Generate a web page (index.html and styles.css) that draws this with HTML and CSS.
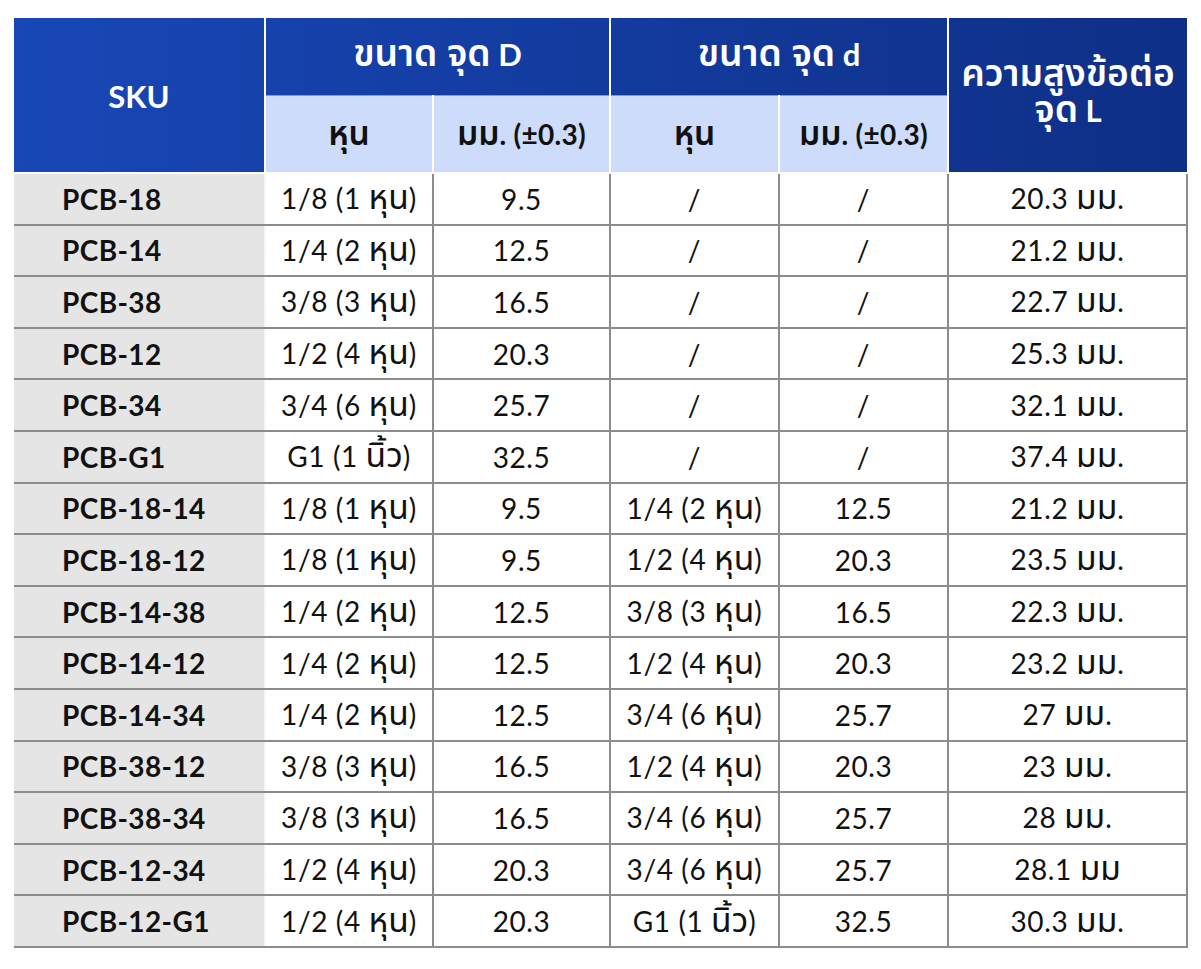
FILE: index.html
```html
<!DOCTYPE html>
<html lang="th">
<head>
<meta charset="utf-8">
<title>PCB</title>
<link rel="stylesheet" href="styles.css">
</head>
<body>
<table class="spec">
  <colgroup>
    <col class="c-sku"><col class="c-d1"><col class="c-d2"><col class="c-s1"><col class="c-s2"><col class="c-l">
  </colgroup>
  <thead>
    <tr class="h1">
      <th rowspan="2" class="hsku">SKU</th>
      <th colspan="2" class="hgrp"><span class="th">ขนาด จุด</span> D</th>
      <th colspan="2" class="hgrp"><span class="th">ขนาด จุด</span> d</th>
      <th rowspan="2" class="hl"><span class="th">ความสูงข้อต่อ</span><br><span class="th">จุด</span> L</th>
    </tr>
    <tr class="h2">
      <th><span class="th">หุน</span></th><th class="gend"><span class="th">มม</span>. (±0.3)</th><th><span class="th">หุน</span></th><th class="gend"><span class="th">มม</span>. (±0.3)</th>
    </tr>
  </thead>
  <tbody>
    <tr><td class="sku">PCB-18</td><td>1/8 (1 <span class="th">หุน</span>)</td><td>9.5</td><td>/</td><td>/</td><td>20.3 <span class="th">มม</span>.</td></tr>
    <tr><td class="sku">PCB-14</td><td>1/4 (2 <span class="th">หุน</span>)</td><td>12.5</td><td>/</td><td>/</td><td>21.2 <span class="th">มม</span>.</td></tr>
    <tr><td class="sku">PCB-38</td><td>3/8 (3 <span class="th">หุน</span>)</td><td>16.5</td><td>/</td><td>/</td><td>22.7 <span class="th">มม</span>.</td></tr>
    <tr><td class="sku">PCB-12</td><td>1/2 (4 <span class="th">หุน</span>)</td><td>20.3</td><td>/</td><td>/</td><td>25.3 <span class="th">มม</span>.</td></tr>
    <tr><td class="sku">PCB-34</td><td>3/4 (6 <span class="th">หุน</span>)</td><td>25.7</td><td>/</td><td>/</td><td>32.1 <span class="th">มม</span>.</td></tr>
    <tr><td class="sku">PCB-G1</td><td>G1 (1 <span class="th">นิ้ว</span>)</td><td>32.5</td><td>/</td><td>/</td><td>37.4 <span class="th">มม</span>.</td></tr>
    <tr><td class="sku">PCB-18-14</td><td>1/8 (1 <span class="th">หุน</span>)</td><td>9.5</td><td>1/4 (2 <span class="th">หุน</span>)</td><td>12.5</td><td>21.2 <span class="th">มม</span>.</td></tr>
    <tr><td class="sku">PCB-18-12</td><td>1/8 (1 <span class="th">หุน</span>)</td><td>9.5</td><td>1/2 (4 <span class="th">หุน</span>)</td><td>20.3</td><td>23.5 <span class="th">มม</span>.</td></tr>
    <tr><td class="sku">PCB-14-38</td><td>1/4 (2 <span class="th">หุน</span>)</td><td>12.5</td><td>3/8 (3 <span class="th">หุน</span>)</td><td>16.5</td><td>22.3 <span class="th">มม</span>.</td></tr>
    <tr><td class="sku">PCB-14-12</td><td>1/4 (2 <span class="th">หุน</span>)</td><td>12.5</td><td>1/2 (4 <span class="th">หุน</span>)</td><td>20.3</td><td>23.2 <span class="th">มม</span>.</td></tr>
    <tr><td class="sku">PCB-14-34</td><td>1/4 (2 <span class="th">หุน</span>)</td><td>12.5</td><td>3/4 (6 <span class="th">หุน</span>)</td><td>25.7</td><td>27 <span class="th">มม</span>.</td></tr>
    <tr><td class="sku">PCB-38-12</td><td>3/8 (3 <span class="th">หุน</span>)</td><td>16.5</td><td>1/2 (4 <span class="th">หุน</span>)</td><td>20.3</td><td>23 <span class="th">มม</span>.</td></tr>
    <tr><td class="sku">PCB-38-34</td><td>3/8 (3 <span class="th">หุน</span>)</td><td>16.5</td><td>3/4 (6 <span class="th">หุน</span>)</td><td>25.7</td><td>28 <span class="th">มม</span>.</td></tr>
    <tr><td class="sku">PCB-12-34</td><td>1/2 (4 <span class="th">หุน</span>)</td><td>20.3</td><td>3/4 (6 <span class="th">หุน</span>)</td><td>25.7</td><td>28.1 <span class="th">มม</span></td></tr>
    <tr><td class="sku">PCB-12-G1</td><td>1/2 (4 <span class="th">หุน</span>)</td><td>20.3</td><td>G1 (1 <span class="th">นิ้ว</span>)</td><td>32.5</td><td>30.3 <span class="th">มม</span>.</td></tr>
  </tbody>
</table>
</body>
</html>
```
FILE: styles.css
```css
html, body {
  margin: 0;
  padding: 0;
  background: #ffffff;
}
body {
  padding: 18px 0 0 14px;
  font-family: "Lato", "Noto Sans Thai", sans-serif;
  color: #111111;
}
.th {
  font-family: "Noto Sans Thai", "Lato", sans-serif;
  font-size: 1.2em;
  letter-spacing: 0;
}
.spec {
  border-collapse: collapse;
  table-layout: fixed;
  width: 1173px;
}
.c-sku { width: 251px; }
.c-d1 { width: 168px; }
.c-d2 { width: 177px; }
.c-s1 { width: 169px; }
.c-s2 { width: 169px; }
.c-l { width: 239px; }

.spec th {
  padding: 0;
  text-align: center;
  font-weight: 700;
  border: 2px solid #ffffff;
  white-space: nowrap;
}
.spec th .th {
  font-weight: 600;
}
.h1 th {
  height: 72px;
  padding-bottom: 5px;
  color: #ffffff;
  font-size: 31px;
  line-height: 36px;
  background: linear-gradient(90deg, #1847b6 14px, #0e2f86 1186px) fixed;
  border-top: 0;
}
.h1 th.hsku {
  border-left: 0;
  padding-bottom: 0;
  padding-top: 2px;
}
.h1 th.hgrp {
  border-bottom: 1px solid #7d98dc;
}
.h1 th.hl {
  border-right: 0;
  line-height: 35px;
  padding-bottom: 4px;
}
.h2 th {
  height: 76px;
  padding: 0;
  background: #cddcfb;
  color: #111111;
  font-size: 28px;
  line-height: 36px;
  letter-spacing: 0.3px;
  border-top: 1px solid #7d98dc;
  border-right: 1px solid #8a8a8a;
}
.h2 th.gend {
  border-right: 2px solid #ffffff;
}
.spec td {
  height: 49.6px;
  padding: 0;
  text-align: center;
  font-size: 28px;
  line-height: 36px;
  letter-spacing: 0.6px;
  border: 2px solid #8c8c8c;
  white-space: nowrap;
}
.spec td.sku {
  background: #e5e5e5;
  font-weight: 700;
  text-align: left;
  padding-left: 48px;
  letter-spacing: 0.4px;
  border-left: 0;
  border-right: 2px solid #f6f6f6;
}
.spec tbody tr:first-child td {
  border-top: 2px solid #ffffff;
}
```
